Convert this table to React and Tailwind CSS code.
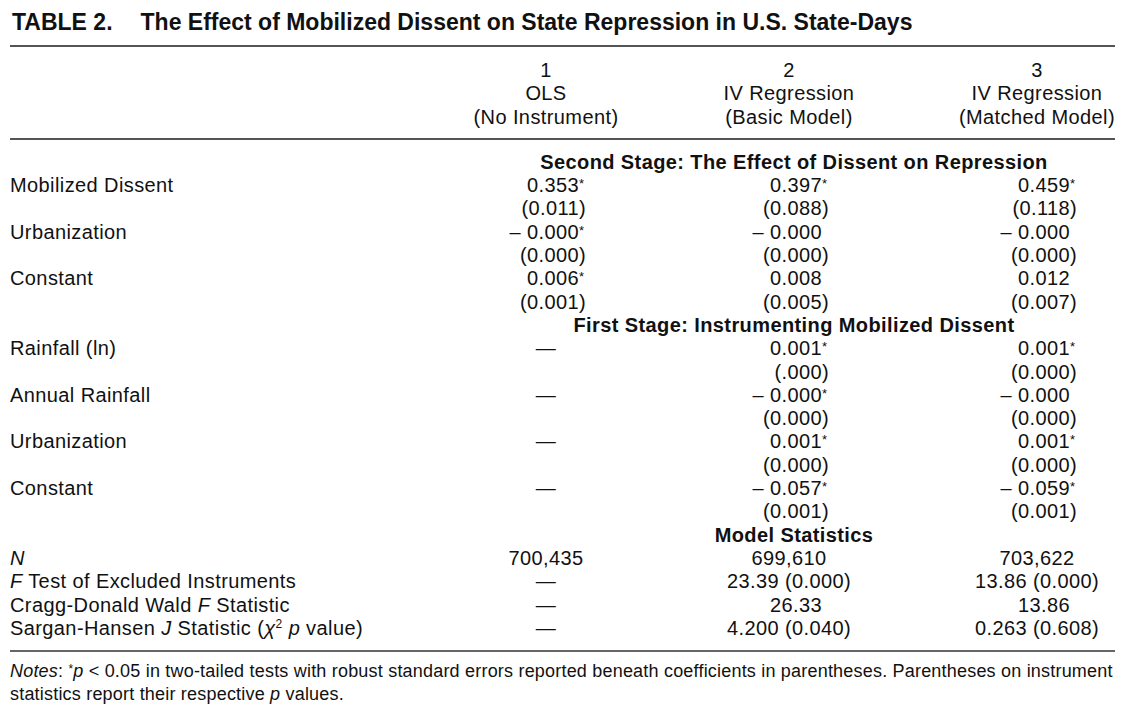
import React from "react";

const COLS = "grid grid-cols-[463px_146px_340px_156px] h-[23.3px]";

// value with decimal-style alignment: main text right aligned, suffix slot for ")" or "*"
const Num = ({ v }) => {
  let main = v;
  let suffix = "";
  if (v.endsWith("*") || v.endsWith(")")) {
    main = v.slice(0, -1);
    suffix = v.slice(-1);
  }
  return (
    <div className="flex justify-center">
      <div className="w-[80px] flex justify-end whitespace-nowrap">
        <span>{main}</span>
        <span className="w-[7px] text-left">
          {suffix === "*" ? (
            <span className="relative -top-[4px] text-[13px] leading-none">*</span>
          ) : (
            suffix
          )}
        </span>
      </div>
    </div>
  );
};

const Center = ({ v }) => (
  <div className="flex justify-center whitespace-nowrap">{v}</div>
);

const Cell = ({ v }) => {
  if (v === "" || v == null) return <div />;
  if (v === "—") return <Center v="—" />;
  if (/^[(–0-9.]/.test(v) && !v.includes(" (") && !v.includes(",")) return <Num v={v} />;
  return <Center v={v} />;
};

const Row = ({ label, cells }) => (
  <div className={COLS}>
    <div className="whitespace-nowrap">{label}</div>
    {cells.map((c, i) => (
      <Cell key={i} v={c} />
    ))}
  </div>
);

const Section = ({ title }) => (
  <div className={COLS}>
    <div />
    <div className="col-span-3 flex justify-center font-bold whitespace-nowrap">
      {title}
    </div>
  </div>
);

const App = () => {
  return (
    <div className="w-[1125px] h-[710px] bg-white px-[10px] pt-[8px] text-[#111] font-['Liberation_Sans',Arial,sans-serif] text-[20px] leading-[23.3px] tracking-[0.4px]">
      {/* Title */}
      <h1 className="flex gap-[28px] pl-[2px] text-[23px] font-bold leading-[28px] tracking-normal whitespace-nowrap">
        <span>TABLE 2.</span>
        <span>The Effect of Mobilized Dissent on State Repression in U.S. State-Days</span>
      </h1>
      <div className="mt-[9px] border-t-2 border-[#555]" />

      {/* Column headers */}
      <div className="grid grid-cols-[463px_146px_340px_156px] pt-[12px]">
        <div />
        <div className="flex flex-col items-center whitespace-nowrap">
          <span>1</span>
          <span>OLS</span>
          <span>(No Instrument)</span>
        </div>
        <div className="flex flex-col items-center whitespace-nowrap">
          <span>2</span>
          <span>IV Regression</span>
          <span>(Basic Model)</span>
        </div>
        <div className="flex flex-col items-center whitespace-nowrap">
          <span>3</span>
          <span>IV Regression</span>
          <span>(Matched Model)</span>
        </div>
      </div>
      <div className="mt-[9px] border-t-2 border-[#555]" />

      {/* Body */}
      <div className="pt-[11px]">
        <Section title="Second Stage: The Effect of Dissent on Repression" />
        <Row label="Mobilized Dissent" cells={["0.353*", "0.397*", "0.459*"]} />
        <Row label="" cells={["(0.011)", "(0.088)", "(0.118)"]} />
        <Row label="Urbanization" cells={["– 0.000*", "– 0.000", "– 0.000"]} />
        <Row label="" cells={["(0.000)", "(0.000)", "(0.000)"]} />
        <Row label="Constant" cells={["0.006*", "0.008", "0.012"]} />
        <Row label="" cells={["(0.001)", "(0.005)", "(0.007)"]} />

        <Section title="First Stage: Instrumenting Mobilized Dissent" />
        <Row label="Rainfall (ln)" cells={["—", "0.001*", "0.001*"]} />
        <Row label="" cells={["", "(.000)", "(0.000)"]} />
        <Row label="Annual Rainfall" cells={["—", "– 0.000*", "– 0.000"]} />
        <Row label="" cells={["", "(0.000)", "(0.000)"]} />
        <Row label="Urbanization" cells={["—", "0.001*", "0.001*"]} />
        <Row label="" cells={["", "(0.000)", "(0.000)"]} />
        <Row label="Constant" cells={["—", "– 0.057*", "– 0.059*"]} />
        <Row label="" cells={["", "(0.001)", "(0.001)"]} />

        <Section title="Model Statistics" />
        <Row label={<i>N</i>} cells={["700,435", "699,610", "703,622"]} />
        <Row
          label={
            <>
              <i>F</i> Test of Excluded Instruments
            </>
          }
          cells={["—", "23.39 (0.000)", "13.86 (0.000)"]}
        />
        <Row
          label={
            <>
              Cragg-Donald Wald <i>F</i> Statistic
            </>
          }
          cells={["—", "26.33", "13.86"]}
        />
        <Row
          label={
            <>
              Sargan-Hansen <i>J</i> Statistic (<i>χ</i>
              <span className="relative -top-[7px] text-[12px] leading-none">2</span> <i>p</i> value)
            </>
          }
          cells={["—", "4.200 (0.040)", "0.263 (0.608)"]}
        />
      </div>
      <div className="mt-[10px] border-t-2 border-[#666]" />

      {/* Notes */}
      <p className="pt-[8px] text-[18px] leading-[23px] tracking-[0.2px] whitespace-nowrap">
        <i>Notes</i>:{" "}
        <span className="relative -top-[4px] text-[12px] leading-none">*</span>
        <i>p</i> &lt; 0.05 in two-tailed tests with robust standard errors reported beneath
        coefficients in parentheses. Parentheses on instrument
        <br />
        statistics report their respective <i>p</i> values.
      </p>
    </div>
  );
};

export default App;
